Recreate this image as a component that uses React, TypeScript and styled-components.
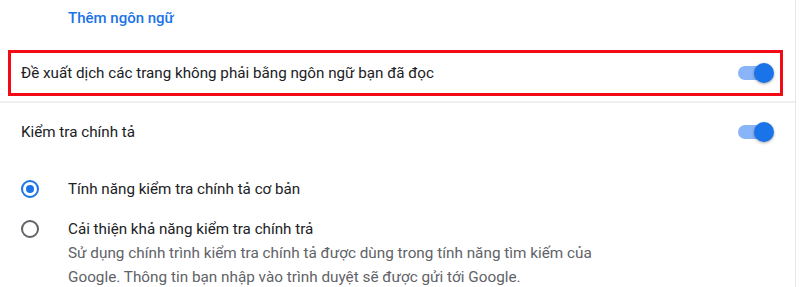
import React from 'react'
import styled, { createGlobalStyle } from 'styled-components'

const GlobalStyle = createGlobalStyle`
  html, body {
    margin: 0;
    padding: 0;
    background: #ffffff;
  }
  body {
    font-family: Roboto, "Noto Sans", Arial, sans-serif;
    color: #202124;
    -webkit-font-smoothing: antialiased;
  }
`

const Panel = styled.div`
  width: 795px;
  height: 287px;
  border-right: 1px solid #e6e6e6;
  overflow: hidden;
`

const LinkRow = styled.div`
  height: 36px;
  display: flex;
  align-items: center;
  padding-left: 68px;
  margin-bottom: 14px;
`

const BlueLink = styled.a`
  color: #1a73e8;
  font-size: 15px;
  font-weight: 500;
  text-decoration: none;
  cursor: pointer;
`

const SettingRow = styled.div<{ highlighted?: boolean }>`
  display: flex;
  align-items: center;
  justify-content: space-between;
  box-sizing: border-box;
  height: ${(p) => (p.highlighted ? '46px' : '57px')};
  margin: ${(p) => (p.highlighted ? '0 12px 0 8px' : '0 12px 0 0')};
  padding: ${(p) => (p.highlighted ? '0 6px 0 10px' : '0 9px 0 21px')};
  border: ${(p) => (p.highlighted ? '3px solid #f20a14' : 'none')};
`

const Label = styled.span`
  font-size: 15.2px;
  color: #202124;
`

const Divider = styled.div`
  height: 2px;
  background: #efefef;
  margin-top: 5px;
`

const Track = styled.div<{ on: boolean }>`
  position: relative;
  width: 34px;
  height: 14px;
  border-radius: 7px;
  background: ${(p) => (p.on ? '#8ab4f8' : '#bdc1c6')};
  margin-right: 2px;
`

const Knob = styled.div<{ on: boolean }>`
  position: absolute;
  top: -3px;
  left: ${(p) => (p.on ? '16px' : '-2px')};
  width: 20px;
  height: 20px;
  border-radius: 50%;
  background: ${(p) => (p.on ? '#1a73e8' : '#ffffff')};
  box-shadow: 0 1px 3px rgba(0, 0, 0, 0.35);
`

const Toggle = ({ on }: { on: boolean }) => (
  <Track on={on}>
    <Knob on={on} />
  </Track>
)

const RadioGroup = styled.div`
  display: flex;
  flex-direction: column;
  padding-left: 21px;
`

const RadioRow = styled.div`
  display: flex;
  align-items: flex-start;
  gap: 29px;
`

const RadioCircle = styled.span<{ checked: boolean }>`
  flex: none;
  box-sizing: border-box;
  width: 18px;
  height: 18px;
  margin-top: 3px;
  border-radius: 50%;
  border: 2px solid ${(p) => (p.checked ? '#1a73e8' : '#5f6368')};
  display: flex;
  align-items: center;
  justify-content: center;
  &::after {
    content: '';
    display: ${(p) => (p.checked ? 'block' : 'none')};
    width: 8px;
    height: 8px;
    border-radius: 50%;
    background: #1a73e8;
  }
`

const RadioText = styled.div`
  display: flex;
  flex-direction: column;
`

const RadioLabel = styled.span`
  font-size: 15.2px;
  line-height: 24px;
  color: #202124;
`

const RadioDescription = styled.span`
  font-size: 15.3px;
  line-height: 24px;
  color: #5f6368;
  width: 560px;
`

const FirstRadio = styled(RadioRow)`
  margin-top: 17px;
  margin-bottom: 16px;
`

export default function App() {
  return (
    <>
      <GlobalStyle />
      <Panel>
        <LinkRow>
          <BlueLink>Thêm ngôn ngữ</BlueLink>
        </LinkRow>
        <SettingRow highlighted>
          <Label>Đề xuất dịch các trang không phải bằng ngôn ngữ bạn đã đọc</Label>
          <Toggle on />
        </SettingRow>
        <Divider />
        <SettingRow>
          <Label>Kiểm tra chính tả</Label>
          <Toggle on />
        </SettingRow>
        <RadioGroup>
          <FirstRadio>
            <RadioCircle checked />
            <RadioText>
              <RadioLabel>Tính năng kiểm tra chính tả cơ bản</RadioLabel>
            </RadioText>
          </FirstRadio>
          <RadioRow>
            <RadioCircle checked={false} />
            <RadioText>
              <RadioLabel>Cải thiện khả năng kiểm tra chính trả</RadioLabel>
              <RadioDescription>
                Sử dụng chính trình kiểm tra chính tả được dùng trong tính năng tìm kiếm của Google. Thông tin bạn nhập vào trình duyệt sẽ được gửi tới Google.
              </RadioDescription>
            </RadioText>
          </RadioRow>
        </RadioGroup>
      </Panel>
    </>
  )
}
